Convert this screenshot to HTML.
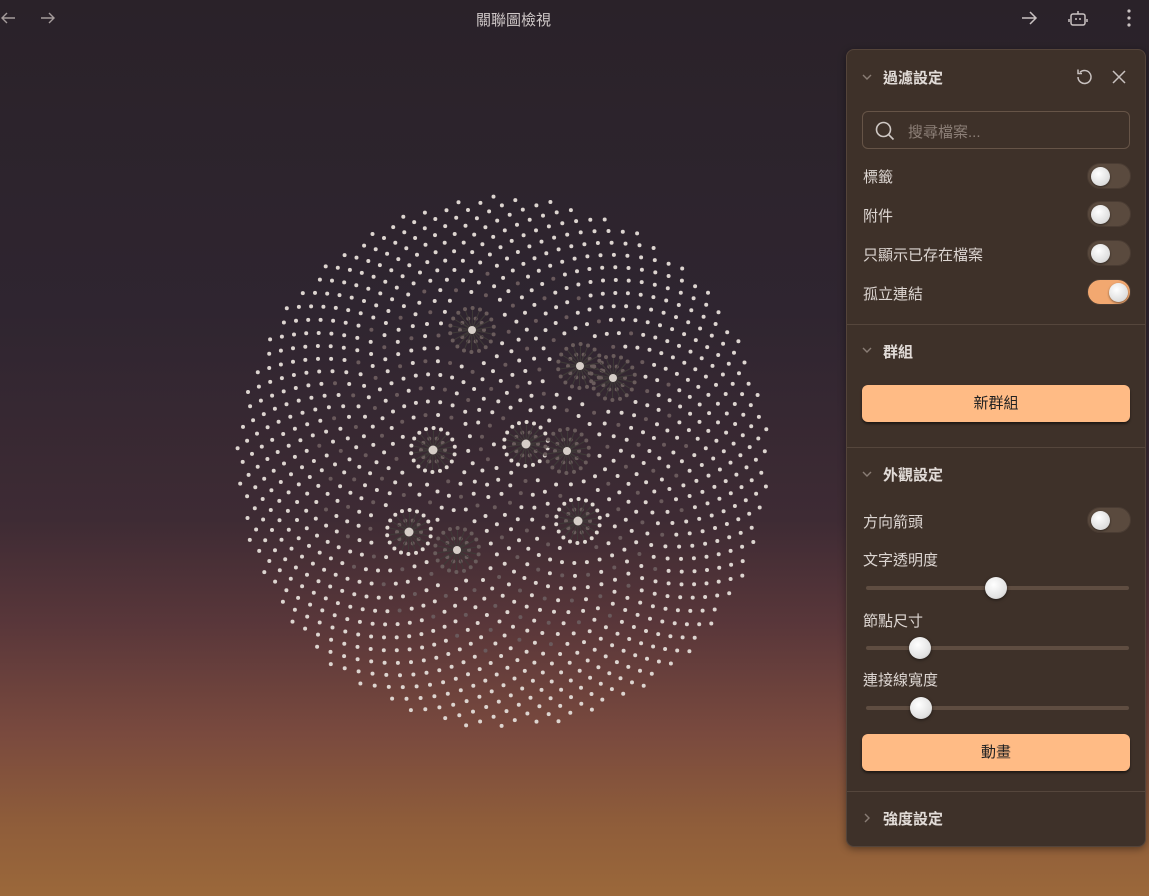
<!DOCTYPE html>
<html><head><meta charset="utf-8">
<style>
*{box-sizing:border-box;margin:0;padding:0}
html,body{width:1149px;height:896px;overflow:hidden}
body{font-family:"Liberation Sans","Noto Sans CJK TC",sans-serif;background:linear-gradient(180deg,#2a2229 0%,#2f2530 35%,#3e2b34 58%,#5a373a 70%,#7a4a3e 82%,#8f5d3a 92%,#9b683a 100%);position:relative;color:#ddd}
svg.g{position:absolute;left:0;top:0}
.top{position:absolute;top:0;left:0;width:1149px;height:36px}
.title{position:absolute;left:0;width:1027px;text-align:center;top:9px;font-size:15px;color:#cfc8c8}
.panel{position:absolute;left:846px;top:49px;width:300px;height:798px;background:#3e3129;border:1px solid #54443a;border-radius:8px;box-shadow:0 2px 8px rgba(0,0,0,.4)}
.hd{position:absolute;left:36px;font-size:15px;font-weight:bold;color:#e2dcd8}
.chev{position:absolute;left:14px;width:12px;height:12px}
.lbl{position:absolute;left:16px;font-size:15px;color:#ddd6d2}
.tg{position:absolute;left:240px;width:44px;height:26px;border-radius:13px;background:#5a4a3e;border:1px solid #4a3c33}
.tg::after{content:"";position:absolute;left:3px;top:3px;width:19px;height:19px;border-radius:50%;background:radial-gradient(circle at 40% 35%,#fff,#ddd 70%,#bbb);box-shadow:0 1px 2px rgba(0,0,0,.5)}
.tg.on{background:#f2a870}
.tg.on::after{left:21px}
.sep{position:absolute;left:0;width:298px;height:1px;background:#55463c}
.btn{position:absolute;left:15px;width:268px;height:37px;border-radius:6px;background:#ffbb85;color:#222;font-size:15px;text-align:center;line-height:37px;box-shadow:0 2px 2px rgba(0,0,0,.5)}
.sl{position:absolute;left:19px;width:263px;height:4px;border-radius:2px;background:#5f4d41}
.kn{position:absolute;width:22px;height:22px;border-radius:50%;top:-9px;background:radial-gradient(circle at 40% 35%,#fff,#e2e2e2 65%,#bbb);box-shadow:0 1px 3px rgba(0,0,0,.5)}
.search{position:absolute;left:15px;top:61px;width:268px;height:38px;border:1px solid #665447;border-radius:6px}
.search span{position:absolute;left:45px;top:9px;font-size:15px;color:#8c7f77}
</style></head><body>
<svg class="g" id="g" width="1149" height="896"></svg>
<div class="top">
<svg style="position:absolute;left:0;top:10px" width="16" height="16" viewBox="0 0 16 16" fill="none" stroke="#a59c9c" stroke-width="1.4"><path d="M15 8H2M7 3L2 8l5 5"/></svg>
<svg style="position:absolute;left:40px;top:10px" width="16" height="16" viewBox="0 0 16 16" fill="none" stroke="#a59c9c" stroke-width="1.4"><path d="M1 8h13M9 3l5 5-5 5"/></svg>
<div class="title">關聯圖檢視</div>
<svg style="position:absolute;left:1020px;top:9px" width="18" height="18" viewBox="0 0 18 18" fill="none" stroke="#c9c2c2" stroke-width="1.5"><path d="M2 9h14M10 3l6 6-6 6"/></svg>
<svg style="position:absolute;left:1068px;top:8px" width="20" height="20" viewBox="0 0 20 20" fill="none" stroke="#c9c2c2" stroke-width="1.5"><rect x="3" y="6" width="14" height="11" rx="2"/><path d="M10 6V3M1 11v3M19 11v3"/><path d="M8 10v2M12 10v2"/></svg>
<svg style="position:absolute;left:1124px;top:8px" width="10" height="20"><circle cx="5" cy="3" r="1.6" fill="#c9c2c2"/><circle cx="5" cy="10" r="1.6" fill="#c9c2c2"/><circle cx="5" cy="17" r="1.6" fill="#c9c2c2"/></svg>
</div>
<div class="panel">
<svg class="chev" style="top:21px" viewBox="0 0 12 12" fill="none" stroke="#8a7d75" stroke-width="1.4"><path d="M2 4l4 4 4-4"/></svg>
<div class="hd" style="top:17px">過濾設定</div>
<svg style="position:absolute;left:227px;top:17px" width="20" height="20" viewBox="0 0 20 20" fill="none" stroke="#c9c2c0" stroke-width="1.5"><path d="M4 10a6.5 6.5 0 1 0 2-4.7"/><path d="M4 2.5v4h4"/></svg>
<svg style="position:absolute;left:264px;top:19px" width="16" height="16" viewBox="0 0 16 16" fill="none" stroke="#c9c2c0" stroke-width="1.5"><path d="M2 2l12 12M14 2L2 14"/></svg>
<div class="search"><svg style="position:absolute;left:11px;top:8px" width="22" height="22" viewBox="0 0 22 22" fill="none" stroke="#cfc8c4" stroke-width="1.6"><circle cx="9.5" cy="9.5" r="7"/><path d="M14.5 14.5l5 5"/></svg><span>搜尋檔案...</span></div>
<div class="lbl" style="top:116px">標籤</div><div class="tg" style="top:113px"></div>
<div class="lbl" style="top:155px">附件</div><div class="tg" style="top:151px"></div>
<div class="lbl" style="top:194px">只顯示已存在檔案</div><div class="tg" style="top:190px"></div>
<div class="lbl" style="top:233px">孤立連結</div><div class="tg on" style="top:229px"></div>
<div class="sep" style="top:274px"></div>
<svg class="chev" style="top:294px" viewBox="0 0 12 12" fill="none" stroke="#8a7d75" stroke-width="1.4"><path d="M2 4l4 4 4-4"/></svg>
<div class="hd" style="top:291px">群組</div>
<div class="btn" style="top:335px">新群組</div>
<div class="sep" style="top:397px"></div>
<svg class="chev" style="top:418px" viewBox="0 0 12 12" fill="none" stroke="#8a7d75" stroke-width="1.4"><path d="M2 4l4 4 4-4"/></svg>
<div class="hd" style="top:414px">外觀設定</div>
<div class="lbl" style="top:461px">方向箭頭</div><div class="tg" style="top:457px"></div>
<div class="lbl" style="top:499px">文字透明度</div>
<div class="sl" style="top:536px"><div class="kn" style="left:119px"></div></div>
<div class="lbl" style="top:560px">節點尺寸</div>
<div class="sl" style="top:596px"><div class="kn" style="left:43px"></div></div>
<div class="lbl" style="top:619px">連接線寬度</div>
<div class="sl" style="top:656px"><div class="kn" style="left:44px"></div></div>
<div class="btn" style="top:684px">動畫</div>
<div class="sep" style="top:741px"></div>
<svg class="chev" style="top:762px" viewBox="0 0 12 12" fill="none" stroke="#8a7d75" stroke-width="1.4"><path d="M4 2l4 4-4 4"/></svg>
<div class="hd" style="top:758px">強度設定</div>
</div>
<script>
(function(){
var g=document.getElementById('g'),s='';
var cx=503,cy=462,R=266,N=1350,ga=Math.PI*(3-Math.sqrt(5));
var hubs=[[526,444,1],[433,450,1],[578,521,1],[409,532,1],[472,330,0],[580,366,0],[613,378,0],[567,451,0],[457,550,0]];
for(var h=0;h<hubs.length;h++){var hx=hubs[h][0],hy=hubs[h][1],big=hubs[h][2];
for(var ring=0;ring<2;ring++){var n=ring?18:10,r=ring?22:12;
for(var k=0;k<n;k++){var a=k/n*6.283+ring*0.2;var px=(hx+r*Math.cos(a)).toFixed(1),py=(hy+r*Math.sin(a)).toFixed(1);
s+='<line x1="'+hx+'" y1="'+hy+'" x2="'+px+'" y2="'+py+'" stroke="#3f3a38" stroke-width="1"/>';
s+='<circle cx="'+px+'" cy="'+py+'" r="2" fill="'+(big&&ring?'#e0d8d2':'#6a5c5c')+'"/>';}}}
for(var i=0;i<N;i++){var r=R*Math.sqrt((i+0.5)/N),t=i*ga;var x=cx+r*Math.cos(t),y=cy+r*Math.sin(t);
var near=false;for(var h=0;h<hubs.length;h++){var dx=x-hubs[h][0],dy=y-hubs[h][1];if(dx*dx+dy*dy<900){near=true;break;}}
if(near)continue;
var col=(r<190&&(i%4==0))?'#6a5a5c':'#ddd5d0';
s+='<circle cx="'+x.toFixed(1)+'" cy="'+y.toFixed(1)+'" r="2" fill="'+col+'"/>';}
for(var h=0;h<hubs.length;h++){s+='<circle cx="'+hubs[h][0]+'" cy="'+hubs[h][1]+'" r="'+(h<4?4.5:4)+'" fill="#d6cec8"/>';}
g.innerHTML=s;})();
</script>
</body></html>
